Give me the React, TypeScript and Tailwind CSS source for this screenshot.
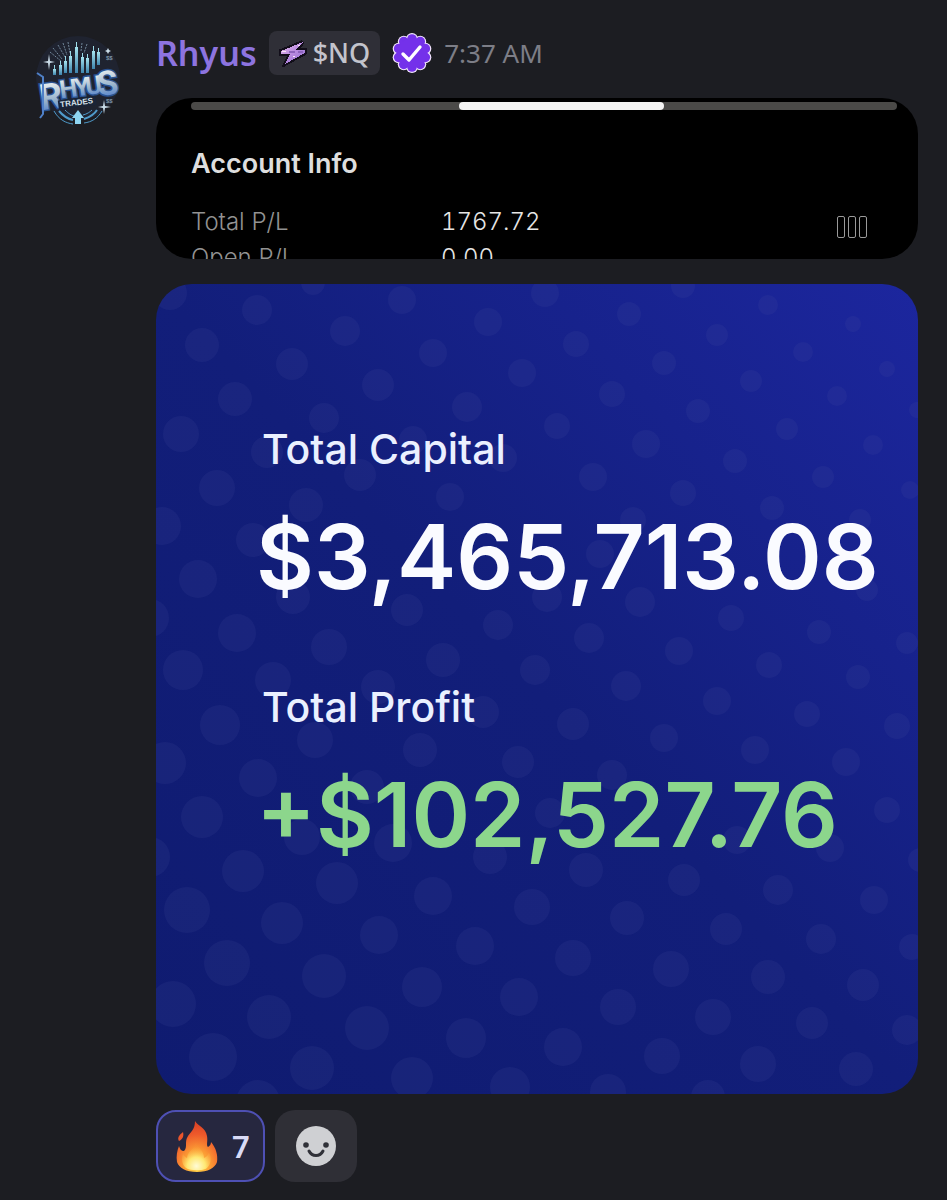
import { useState } from 'react'

// x, y, radius of every dot in the card's backdrop
const dots = [
  [14, 9, 17], [101, 26, 15], [157, -1, 12], [246, 16, 14], [189, 47, 15], [46, 61, 17], [136, 80, 16],
  [332, 38, 14], [389, 9, 14], [277, 69, 14], [222, 101, 16], [366, 89, 14], [79, 115, 17], [311, 123, 15],
  [168, 134, 15], [25, 150, 18], [111, 168, 16], [257, 156, 14], [347, 174, 14], [204, 191, 16], [61, 204, 18],
  [150, 221, 17], [294, 213, 14], [6, 242, 19], [97, 256, 17], [42, 295, 19], [-6, 334, 19], [137, 313, 17],
  [251, 326, 16], [342, 341, 15], [81, 349, 19], [173, 363, 18], [287, 376, 17], [379, 386, 15], [27, 386, 20],
  [117, 396, 18], [527, 2, 12], [473, 30, 12], [420, 60, 13], [561, 51, 11], [612, 21, 10], [697, 40, 8],
  [508, 79, 12], [647, 68, 10], [731, 85, 8], [595, 97, 11], [456, 110, 13], [681, 112, 10], [542, 127, 12],
  [761, 126, 8], [401, 142, 13], [631, 145, 11], [490, 160, 14], [717, 161, 10], [579, 177, 12], [437, 193, 14],
  [667, 193, 11], [527, 209, 13], [754, 206, 9], [616, 224, 12], [477, 236, 13], [704, 236, 11], [484, 318, 15],
  [575, 334, 13], [663, 348, 12], [433, 354, 15], [523, 367, 14], [751, 359, 11], [613, 381, 13], [702, 393, 12],
  [470, 402, 15], [391, 313, 15], [444, 270, 14], [711, 306, 11], [64, 441, 20], [159, 456, 18], [264, 466, 17],
  [327, 428, 16], [362, 478, 16], [222, 403, 17], [9, 479, 21], [102, 494, 19], [211, 503, 17], [46, 533, 21],
  [146, 553, 18], [237, 559, 19], [-6, 573, 20], [87, 587, 21], [334, 573, 17], [181, 599, 21], [277, 612, 19],
  [376, 623, 18], [31, 626, 23], [126, 639, 21], [223, 651, 19], [71, 679, 23], [319, 662, 19], [168, 692, 22],
  [266, 703, 20], [17, 720, 23], [363, 713, 19], [113, 733, 22], [211, 744, 22], [310, 754, 20], [57, 773, 24],
  [156, 784, 22], [256, 794, 21], [354, 803, 20], [102, 818, 22], [561, 417, 14], [651, 430, 13], [741, 442, 13],
  [417, 440, 16], [508, 454, 14], [599, 466, 14], [690, 478, 14], [456, 491, 15], [731, 526, 13], [394, 529, 15],
  [581, 556, 14], [674, 564, 14], [764, 576, 12], [430, 586, 17], [528, 596, 16], [622, 606, 15], [718, 616, 14],
  [471, 634, 17], [570, 645, 16], [665, 655, 15], [756, 663, 13], [417, 674, 18], [515, 685, 18], [612, 693, 17],
  [707, 701, 16], [462, 723, 18], [557, 733, 18], [656, 739, 16], [751, 746, 15], [407, 763, 19], [506, 772, 18],
  [602, 780, 18], [700, 785, 17], [452, 808, 18], [552, 813, 17],
]

const accountRows = [
  { label: 'Total P/L', value: '1767.72' },
  { label: 'Open P/L', value: '0.00' },
]

function Avatar() {
  // candle: x, wick top, body top, bottom
  const candles = [
    [18, 30, 34, 40], [24, 26, 30, 40], [29, 21, 26, 38], [34, 16, 21, 38], [40, 7, 12, 38],
    [46, 18, 22, 38], [51, 19, 23, 38], [57, 11, 16, 34], [62, 13, 17, 30],
  ]
  return (
    <svg viewBox="0 0 84 92" className="h-[92px] w-[84px] shrink-0" role="img" aria-label="Rhyus Trades">
      <defs>
        <linearGradient id="logoFill" x1="0" y1="0" x2="0" y2="1">
          <stop offset="0.2" stopColor="#dfe8ec" />
          <stop offset="0.6" stopColor="#93afc9" />
          <stop offset="0.9" stopColor="#4a7bd0" />
        </linearGradient>
        <linearGradient id="candleFill" x1="0" y1="0" x2="0" y2="1">
          <stop offset="0" stopColor="#a5e3ee" />
          <stop offset="1" stopColor="#3d84ad" />
        </linearGradient>
      </defs>
      <circle cx="42" cy="43" r="42" fill="#1f2330" />
      <path
        d="M14 17l11 9M17 13l9 11M22 10l7 12M27 8l4 12M32 7l2 11M46 8l-1 8M51 9l-3 9"
        stroke="#71879a"
        strokeDasharray="2 1"
      />
      {candles.map(([x, wick, top, bottom]) => (
        <g key={x} fill="url(#candleFill)">
          <rect x={x} y={wick} width="1" height={bottom - wick} />
          <rect x={x - 1} y={top} width="3" height={bottom - top} />
        </g>
      ))}
      <g fill="#c9dbe8">
        <path d="M13 19l1 7 5 1-5 1-1 7-1-7-5-1 5-1z" />
        <path d="M68 65l1 6 6 1-6 1-1 6-1-6-5-1 5-1z" />
        <path d="M72 13l1 2 2 1-2 1-1 2-1-2-2-1 2-1z" />
      </g>
      <g fontFamily="Liberation Sans" fontSize="6" fontWeight="700" fill="#7e96a8">
        <text x="70" y="25">$$</text>
        <text x="70" y="68">$$</text>
      </g>
      {/* lettering: the blue rim goes down first so no letter covers the next one */}
      {[true, false].map((rim) => (
        <g
          key={String(rim)}
          transform="rotate(-8 42 50)"
          fontFamily="Roboto, sans-serif"
          fontWeight="700"
          fill={rim ? '#2a5290' : 'url(#logoFill)'}
          stroke={rim ? '#2a5290' : 'none'}
          strokeWidth={rim ? 3 : 0}
          aria-hidden={rim}
        >
          <text x="2" y="70" fontSize="36">R</text>
          <text x="23" y="61" fontSize="25">H</text>
          <text x="38" y="61" fontSize="25">Y</text>
          <text x="49" y="61" fontSize="25">U</text>
          <text x="61" y="64" fontSize="34">S</text>
        </g>
      ))}
      <path d="M1 38l6 4v37l-3 4" stroke="#4f80c8" strokeWidth="2" fill="none" />
      <g transform="rotate(-7 42 66)">
        <rect x="22" y="63" width="38" height="9" fill="#1a2438" />
        <text x="24" y="70" fontFamily="Liberation Sans" fontWeight="700" fontSize="8" fill="#d5e0e8">TRADES</text>
      </g>
      <g stroke="#4f9bcb" fill="none" strokeWidth="1">
        <path d="M18 76c5 9 12 12 19 13M48 88c8-1 14-5 18-12" />
        <path d="M23 76c5 6 9 8 14 9M48 84c6-2 10-4 13-9" strokeWidth="2" />
        <path d="M29 75c4 4 6 5 9 6M47 80c4-1 7-3 9-5" />
      </g>
      <path d="M42 75l6 8h-3v6h-6v-6h-3z" fill="#8ed5f2" />
    </svg>
  )
}

function PixelBolt() {
  return (
    <svg viewBox="0 0 28 28" className="size-7" shapeRendering="crispEdges" aria-hidden="true">
      <defs>
        <linearGradient id="boltFill" x1="0" y1="0" x2="1" y2="1">
          <stop offset="0.1" stopColor="#e2b8ea" />
          <stop offset="0.5" stopColor="#b98ae0" />
          <stop offset="0.8" stopColor="#a07ad6" />
        </linearGradient>
      </defs>
      <path d="M24 3L2 12v3h9L6 25l20-11v-3h-9z" fill="url(#boltFill)" stroke="#120e1a" strokeWidth="4" paintOrder="stroke" />
      <path d="M10 12h6v2h-6zM19 12h5v2h-5z" fill="#8d63bd" />
      <path d="M3 12h4v1H3zM19 6h2v1h-2zM14 17h2v1h-2z" fill="#fbe6fa" />
    </svg>
  )
}

function VerifiedBadge() {
  const lobes = 10
  const points = Array.from({ length: lobes }, (_, i) => {
    const a = (i / lobes) * Math.PI * 2 - Math.PI / 2
    return [20 + Math.cos(a) * 14, 20 + Math.sin(a) * 14]
  })
  return (
    <svg viewBox="0 0 40 40" className="size-10" role="img" aria-label="Verified">
      {points.map(([x, y], i) => <circle key={i} cx={x} cy={y} r="6" fill="#f3e6ff" />)}
      {points.map(([x, y], i) => <circle key={i} cx={x} cy={y} r="4.8" fill="#7431ea" />)}
      <circle cx="20" cy="20" r="15" fill="#7431ea" />
      <path d="M11 21l6 6L28 14" fill="none" stroke="#fff" strokeWidth="3.4" strokeLinecap="round" strokeLinejoin="round" />
    </svg>
  )
}

function Flame() {
  return (
    <svg viewBox="0 0 42 52" className="h-[52px] w-[42px]" aria-hidden="true">
      <defs>
        <radialGradient id="flameOuter" cx="0.5" cy="0.9" r="0.85">
          <stop offset="0" stopColor="#ffd84a" />
          <stop offset="0.4" stopColor="#fb9a34" />
          <stop offset="0.75" stopColor="#ee5a2b" />
          <stop offset="1" stopColor="#dc4426" />
        </radialGradient>
        <radialGradient id="flameInner" cx="0.5" cy="0.85" r="0.7">
          <stop offset="0" stopColor="#fffbd6" />
          <stop offset="0.45" stopColor="#ffe873" />
          <stop offset="1" stopColor="#fb9a34" stopOpacity="0.1" />
        </radialGradient>
      </defs>
      <path d="M19 1c2 4 11 7 12 15 1 5-1 9 1 11 2-1 3-3 3-5 5 6 7 13 6 20-2 6-9 10-20 10S3 48 1 42c-1-6 0-11 2-16 1 3 2 5 5 5 4-4 0-9 4-15 3-4 7-7 7-15z" fill="url(#flameOuter)" />
      <path d="M7 12c1 4 0 7-4 9-2-3 0-6 4-9z" fill="#e9552c" />
      <path d="M20 22c1 5 8 8 8 16 3-1 4-3 5-6 3 6 2 12-2 16-3 3-17 3-21 0-4-3-5-9-3-15 1 3 2 4 4 5 1-8 8-9 9-16z" fill="url(#flameInner)" />
    </svg>
  )
}

function Smiley() {
  return (
    <svg viewBox="0 0 40 40" className="size-10" aria-hidden="true">
      <circle cx="20" cy="20" r="20" fill="#cfd0d3" />
      <circle cx="10" cy="19" r="2.8" fill="#303138" />
      <circle cx="30" cy="19" r="2.8" fill="#303138" />
      <path d="M13 25c3 6 11 6 14 0" fill="none" stroke="#303138" strokeWidth="3" strokeLinecap="round" />
    </svg>
  )
}

export default function App() {
  const [reacted, setReacted] = useState(true)

  return (
    <main className="min-h-screen bg-[#1c1d22] font-['Noto_Sans',sans-serif]">
      <article className="flex gap-9 pt-[31px] pr-[29px] pb-[18px] pl-9">
        <div className="pt-1">
          <Avatar />
        </div>

        <div className="min-w-0 flex-1">
          <header className="flex h-11 items-center gap-3">
            <a href="#rhyus" className="text-[34px] leading-11 font-semibold text-[#8d74e0]">Rhyus</a>
            <span className="flex h-11 items-center gap-1.5 rounded-lg bg-[#2f2f37] px-2.5 text-[27px] font-medium text-[#c3c4cc]">
              <PixelBolt />
              $NQ
            </span>
            <VerifiedBadge />
            <time className="text-[26px] text-[#7d7e87]">7:37 AM</time>
          </header>

          {/* --- ACCOUNT INFO --- */}
          <section className="mt-[23px] h-[161px] overflow-hidden rounded-[36px] bg-black px-[35px] pt-1 font-['Inter',sans-serif]">
            <div className="-mr-3.5 h-2 rounded-sm bg-[#4b4a48]">
              <div className="ml-[38%] h-2 w-[29%] rounded-full bg-[#f4f4f3]" />
            </div>
            <h2 className="mt-9 text-[27px] leading-9 font-semibold text-[#dedede]">Account Info</h2>
            <div className="mt-[22px] flex items-start justify-between pr-4">
              <table className="text-left text-[24px] leading-9">
                <tbody>
                  {accountRows.map((row) => (
                    <tr key={row.label}>
                      <th className="w-[250px] p-0 font-light text-[#929292]">{row.label}</th>
                      <td className="p-0 font-light text-[#e6e6e6] tabular-nums">{row.value}</td>
                    </tr>
                  ))}
                </tbody>
              </table>
              <div className="mt-3 flex gap-[3px]">
                <span className="h-[22px] w-2 rounded-xs border border-[#9a9a9a]" />
                <span className="h-[22px] w-2 rounded-xs border border-[#9a9a9a]" />
                <span className="h-[22px] w-2 rounded-xs border border-[#9a9a9a]" />
              </div>
            </div>
          </section>

          {/* --- CAPITAL AND PROFIT --- */}
          <section className="relative mt-[25px] aspect-[762/810] overflow-hidden rounded-[36px] bg-linear-to-bl from-[#1c269e] via-[#121e7a] via-50% to-[#0f1b70] font-['Inter',sans-serif]">
            <svg viewBox="0 0 762 810" preserveAspectRatio="xMidYMid slice" className="absolute inset-0 size-full" aria-hidden="true">
              {dots.map(([x, y, r]) => (
                <circle key={`${x}-${y}`} cx={x} cy={y} r={r} fill="#5054a0" fillOpacity="0.14" />
              ))}
            </svg>
            <dl className="relative pt-[135px] pl-[100px] whitespace-nowrap">
              <dt className="pl-1.5 text-[41px] leading-[60px] font-medium text-[#eaf0ff]">Total Capital</dt>
              <dd className="mt-[18px] text-[89px] leading-[120px] font-semibold text-[#fafbff]">$3,465,713.08</dd>
              <dt className="mt-[60px] pl-1.5 text-[41px] leading-[60px] font-medium text-[#eaf0ff]">Total Profit</dt>
              <dd className="mt-[18px] text-[89px] leading-[120px] font-semibold text-[#8cd68c]">+$102,527.76</dd>
            </dl>
          </section>

          {/* --- REACTIONS --- */}
          <div className="mt-4 flex gap-2.5">
            <button
              onClick={() => setReacted(!reacted)}
              aria-pressed={reacted}
              aria-label="Fire, 7 reactions"
              className={`flex h-[72px] w-[109px] items-center gap-3.5 rounded-[20px] border-2 pl-[18px] text-[31px] font-semibold ${
                reacted ? 'border-[#4e50b4] bg-[#26273f] text-[#d8daf6]' : 'border-transparent bg-[#2f2f36] text-[#c3c4cc]'
              }`}
            >
              <Flame />
              7
            </button>
            <button aria-label="Add reaction" className="flex h-[72px] w-[82px] items-center justify-center rounded-[20px] bg-[#2f2f36]">
              <Smiley />
            </button>
          </div>
        </div>
      </article>
    </main>
  )
}
